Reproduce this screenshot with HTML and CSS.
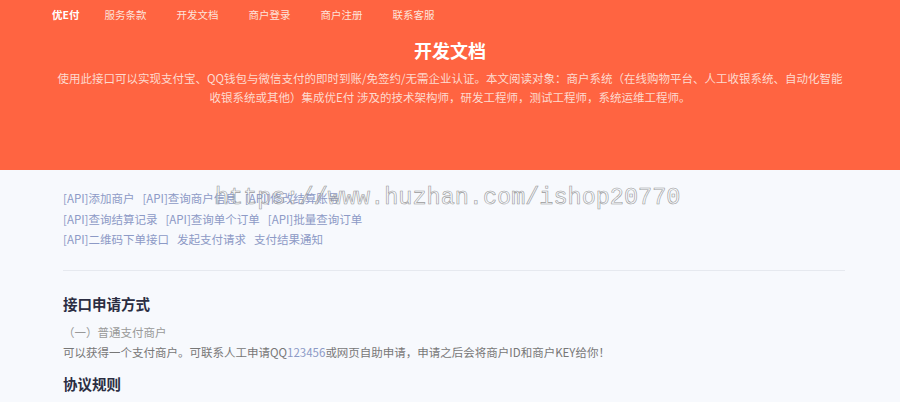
FILE: index.html
```html
<!DOCTYPE html>
<html lang="zh-CN">
<head>
<meta charset="utf-8">
<title>开发文档</title>
<link rel="stylesheet" href="styles.css">
</head>
<body>
<header class="hero">
  <nav class="nav">
    <a class="brand" href="#">优E付</a>
    <a href="#">服务条款</a>
    <a href="#">开发文档</a>
    <a href="#">商户登录</a>
    <a href="#">商户注册</a>
    <a href="#">联系客服</a>
  </nav>
  <h1 class="title">开发文档</h1>
  <p class="lead">使用此接口可以实现支付宝、QQ钱包与微信支付的即时到账/免签约/无需企业认证。本文阅读对象：商户系统（在线购物平台、人工收银系统、自动化智能<br>收银系统或其他）集成优E付 涉及的技术架构师，研发工程师，测试工程师，系统运维工程师。</p>
</header>
<main class="content">
  <div class="links">
    <div class="link-row"><a href="#">[API]添加商户</a><a href="#">[API]查询商户信息</a><a href="#">[API]修改结算账号</a></div>
    <div class="link-row"><a href="#">[API]查询结算记录</a><a href="#">[API]查询单个订单</a><a href="#">[API]批量查询订单</a></div>
    <div class="link-row"><a href="#">[API]二维码下单接口</a><a href="#">发起支付请求</a><a href="#">支付结果通知</a></div>
  </div>
  <hr class="divider">
  <h2 class="heading">接口申请方式</h2>
  <p class="sub">（一）普通支付商户</p>
  <p class="text">可以获得一个支付商户。可联系人工申请QQ<span class="num">123456</span>或网页自助申请，申请之后会将商户ID和商户KEY给你！</p>
  <h2 class="heading heading2">协议规则</h2>
  <div class="watermark">https://www.huzhan.com/ishop20770</div>
</main>
</body>
</html>
```
FILE: styles.css
```css
html, body {
  margin: 0;
  padding: 0;
}
body {
  background: #f7f9fd;
  font-family: "Noto Sans CJK SC", "Noto Sans", sans-serif;
  width: 900px;
  height: 402px;
  overflow: hidden;
}
a {
  text-decoration: none;
  color: inherit;
}
.hero {
  background: #ff6441;
  height: 170px;
  box-sizing: border-box;
  padding-top: 6px;
  color: #fff;
}
.nav {
  display: flex;
  align-items: center;
  gap: 30px;
  padding-left: 52px;
  height: 18px;
  font-size: 10.5px;
}
.nav a {
  color: #fde3db;
  line-height: 18px;
}
.nav .brand {
  color: #fff;
  font-weight: 700;
  margin-right: -5px;
}
.title {
  margin: 14px 0 0;
  text-align: center;
  font-size: 18px;
  line-height: 24px;
  font-weight: 700;
  color: #fff;
}
.lead {
  margin: 7px 0 0;
  text-align: center;
  font-size: 11.5px;
  line-height: 19px;
  color: #fddacf;
}
.content {
  position: relative;
  margin: 0 55px 0 63px;
  padding-top: 18px;
}
.links {
  display: flex;
  flex-direction: column;
  font-size: 11.5px;
  line-height: 20.5px;
}
.link-row {
  display: flex;
  gap: 8px;
}
.link-row a {
  color: #8d9ac6;
}
.divider {
  margin: 20px 0 0;
  border: 0;
  border-top: 1px solid #e6e9ef;
}
.heading {
  margin: 23px 0 0;
  font-size: 14.5px;
  line-height: 20px;
  font-weight: 700;
  color: #2b2d42;
}
.heading2 {
  margin-top: 12px;
}
.sub {
  margin: 8px 0 0;
  font-size: 11.5px;
  line-height: 20px;
  color: #999;
}
.text {
  margin: 0;
  font-size: 11.5px;
  line-height: 20px;
  color: #777;
}
.num {
  color: #8d9ac6;
}
.watermark {
  position: absolute;
  left: 152px;
  top: 13px;
  font-family: "Liberation Mono", monospace;
  font-size: 23.5px;
  line-height: 30px;
  color: transparent;
  -webkit-text-stroke: 0.6px #9a9a9a;
  white-space: nowrap;
  pointer-events: none;
}
```
